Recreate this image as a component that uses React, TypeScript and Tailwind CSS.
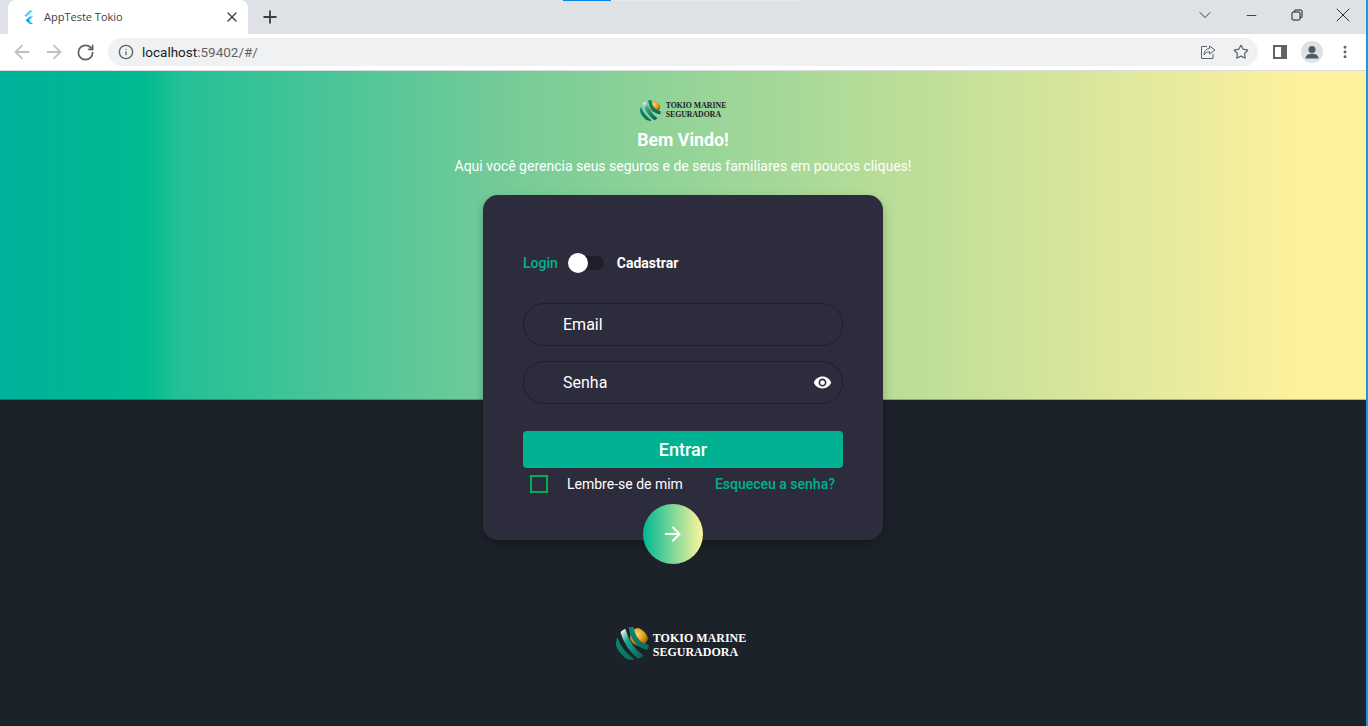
import React from 'react';
import { ArrowLeft, ArrowRight, RotateCw, Info, Star, X, Plus, ChevronDown, Minus, EllipsisVertical } from 'lucide-react';

function Globe({ size, id }: { size: number; id: string }) {
  return (
    <svg width={size} height={size} viewBox="0 0 40 40" fill="none" className="shrink-0">
      <defs>
        <clipPath id={`ball-${id}`}>
          <circle cx="20" cy="20" r="20" />
        </clipPath>
        <radialGradient id={`gold-${id}`} cx="0.4" cy="0.35" r="0.7">
          <stop offset="0" stopColor="#f8d777" />
          <stop offset="0.55" stopColor="#e09a15" />
          <stop offset="1" stopColor="#7d5210" />
        </radialGradient>
        <linearGradient id={`band-${id}`} x1="0" y1="0" x2="1" y2="1">
          <stop offset="0" stopColor="#eef8f4" />
          <stop offset="0.3" stopColor="#18a78c" />
          <stop offset="1" stopColor="#075f50" />
        </linearGradient>
        <linearGradient id={`dark-${id}`} x1="0" y1="0" x2="1" y2="1">
          <stop offset="0" stopColor="#0b8a74" />
          <stop offset="1" stopColor="#0a6a59" />
        </linearGradient>
      </defs>
      <g clipPath={`url(#ball-${id})`}>
        <circle cx="28" cy="12" r="11" fill={`url(#gold-${id})`} />
        <path d="M18 -2 C20 14 28 24 42 25" stroke={`url(#dark-${id})`} strokeWidth="6" />
        <path d="M8 3 C12 18 20 30 32 38" stroke={`url(#band-${id})`} strokeWidth="7" />
        <path d="M-1 14 C3 26 10 34 20 41" stroke={`url(#dark-${id})`} strokeWidth="6" />
      </g>
    </svg>
  );
}

function BrowserChrome() {
  return (
    <div className="h-[71px] shrink-0 flex flex-col bg-white">
      <div className="relative h-[34px] bg-[#dee1e6] flex items-end">
        <div className="absolute top-0 left-[563px] w-[48px] h-px bg-[#0a84e3]" />
        <div className="absolute top-0 left-[611px] w-[193px] h-px bg-[#e8e8e8]" />
        <div className="ml-2 w-[240px] h-[34px] bg-white rounded-t-lg flex items-center pl-[14px] pr-[8px]">
          <svg width="12" height="14" viewBox="0 0 12 14" className="shrink-0">
            <path d="M7.5 0.5 H11 L4 7 L2.5 5.5 Z" fill="#44d1fd" />
            <path d="M7.5 6.5 H11 L7 10.2 L11 14 H7.5 L3.6 10.2 Z" fill="#1fbcfd" />
            <path d="M5.5 9 L7 10.2 L5.3 11.8 Z" fill="#08589c" />
          </svg>
          <span className="ml-[10px] flex-1 text-[11px] text-[#3c4043] font-['Open_Sans','Liberation_Sans',sans-serif]">AppTeste Tokio</span>
          <X size={16} strokeWidth={2.2} className="text-[#45484c]" />
        </div>
        <div className="h-[34px] w-[38px] ml-[3px] flex items-center justify-center">
          <Plus size={20} strokeWidth={2.2} className="text-[#3c4043]" />
        </div>
        <div className="ml-auto h-[34px] flex items-start text-[#1b1c1e]">
          <div className="w-[46px] h-[30px] flex items-center justify-center"><ChevronDown size={20} strokeWidth={1} /></div>
          <div className="w-[46px] h-[30px] flex items-center justify-center"><Minus size={15} strokeWidth={1.3} /></div>
          <div className="w-[46px] h-[30px] flex items-center justify-center">
            <svg width="12" height="12" viewBox="0 0 12 12" fill="none" stroke="currentColor">
              <rect x="1" y="3" width="8" height="8" rx="1" />
              <path d="M3.5 3 V1.5 Q3.5 1 4 1 H10 Q11 1 11 2 V8 Q11 8.5 10.5 8.5 H9" />
            </svg>
          </div>
          <div className="w-[46px] h-[30px] flex items-center justify-center"><X size={24} strokeWidth={0.9} /></div>
        </div>
      </div>
      <div className="h-[36px] flex items-center pl-[11px] pr-[13px] border-b border-[#dadce0] box-content -mb-px">
        <ArrowLeft size={22} strokeWidth={2} className="text-[#bdc0c4]" />
        <ArrowRight size={22} strokeWidth={2} className="text-[#bdc0c4] ml-[10px]" />
        <RotateCw size={19} strokeWidth={2.2} className="text-[#5f6368] ml-[11px]" />
        <div className="ml-[13px] flex-1 h-[28px] rounded-full bg-[#eff1f3] flex items-center pl-[10px] pr-[9px]">
          <Info size={16} strokeWidth={2} className="text-[#5f6368]" />
          <span className="ml-[8px] text-[13.5px] font-['Roboto','Liberation_Sans',sans-serif] text-[#202124]">localhost<span className="text-[#5f6368]">:59402/#/</span></span>
          <div className="ml-auto flex items-center gap-[17px] text-[#5f6368]">
            <svg width="16" height="16" viewBox="0 0 16 16" fill="none" stroke="currentColor" strokeWidth="1">
              <path d="M7 2.5 H1.5 V14.5 H13 V10" />
              <path d="M9.5 2 L15 6 L9.5 10 V7.8 C7 7.8 5 9 4 11 C4 8 6 4.6 9.5 4.3 Z" />
            </svg>
            <Star size={16} strokeWidth={1.8} />
          </div>
        </div>
        <svg width="14" height="14" viewBox="0 0 14 14" className="ml-[15px]">
          <path d="M0 0 H14 V14 H0 Z M2 2 V12 H8 V2 Z" fill="#5f6368" fillRule="evenodd" />
          <rect x="2" y="2" width="6" height="10" fill="#fff" />
        </svg>
        <div className="ml-[14px] w-[22px] h-[22px] rounded-full bg-[#dfe1e5] overflow-hidden">
          <svg width="22" height="22" viewBox="0 0 22 22" fill="#4f5b6b">
            <circle cx="11" cy="8.5" r="3.5" />
            <path d="M4.5 17.5 C4.5 14 8 12.8 11 12.8 C14 12.8 17.5 14 17.5 17.5 Z" />
          </svg>
        </div>
        <EllipsisVertical size={16} strokeWidth={2.4} className="text-[#5f6368] ml-[14px]" />
      </div>
    </div>
  );
}

function LoginCard() {
  return (
    <div className="relative w-[400px] h-[345px] mt-[19px] rounded-[15px] bg-[#2d2c3c] shadow-[0_4px_10px_rgba(0,0,0,0.25)] px-10 pt-[56px] text-white">
      <div className="flex items-center h-6 text-[14px] font-medium">
        <span className="text-[#00b292]">Login</span>
        <div className="relative ml-[10px] w-[36px] h-[14px] rounded-full bg-[#1f1e2b]">
          <div className="absolute -top-[3px] left-0 w-5 h-5 rounded-full bg-white" />
        </div>
        <span className="ml-[13px] font-bold">Cadastrar</span>
      </div>
      <div className="mt-[28px] h-[43px] rounded-[21px] border border-[#1f1e2b] flex items-center pl-[39px] text-[16px]">Email</div>
      <div className="mt-[15px] h-[43px] rounded-[21px] border border-[#1f1e2b] flex items-center pl-[39px] pr-[10px] text-[16px]">
        <span>Senha</span>
        <svg width="19" height="19" viewBox="0 0 24 24" fill="currentColor" className="ml-auto">
          <path d="M12 4.5C7 4.5 2.73 7.61 1 12c1.73 4.39 6 7.5 11 7.5s9.27-3.11 11-7.5c-1.73-4.39-6-7.5-11-7.5zM12 17c-2.76 0-5-2.24-5-5s2.24-5 5-5 5 2.24 5 5-2.24 5-5 5zm0-8c-1.66 0-3 1.34-3 3s1.34 3 3 3 3-1.34 3-3-1.34-3-3-3z" />
        </svg>
      </div>
      <div className="mt-[27px] h-[37px] rounded-[4px] bg-[#00b292] flex items-center justify-center text-[18px] font-medium">Entrar</div>
      <div className="mt-[7px] flex items-center h-[18px] text-[14px]">
        <div className="ml-[7px] w-[18px] h-[18px] border-2 border-[#00ae55]" />
        <span className="ml-[19px]">Lembre-se de mim</span>
        <span className="ml-auto mr-2 text-[#00b292] font-medium">Esqueceu a senha?</span>
      </div>
      <div className="absolute left-[160px] top-[309px] w-[60px] h-[60px] rounded-full bg-[linear-gradient(90deg,#00b894,#fff59d)] flex items-center justify-center">
        <svg width="24" height="24" viewBox="0 0 24 24" fill="currentColor">
          <path d="M12 4l-1.41 1.41L16.17 11H4v2h12.17l-5.58 5.59L12 20l8-8z" />
        </svg>
      </div>
    </div>
  );
}

export default function App() {
  return (
    <div className="w-[1368px] h-[726px] overflow-hidden flex font-['Roboto','Liberation_Sans',sans-serif]">
      <div className="w-[1366px] flex flex-col">
        <BrowserChrome />
        <div className="relative flex-1 bg-[#1c2229]">
          <div className="absolute inset-x-0 top-0 h-[329px] border-b border-black/25 bg-[linear-gradient(90deg,#00b19b_0px,#00ba90_143px,#24c097_180px,#70ca98_480px,#b8dd98_885px,#e2e99d_1140px,#fff29c_1310px)]" />
          <div className="relative flex flex-col items-center">
            <div className="mt-[29px] h-[20px] flex items-center gap-[5px]">
              <Globe size={21} id="a" />
              <div className="font-['Liberation_Serif',serif] text-[7.8px] leading-[9px] text-[#1c2229] font-bold">
                <div>TOKIO MARINE</div>
                <div>SEGURADORA</div>
              </div>
            </div>
            <h1 className="mt-[8px] text-[17.7px] leading-[24px] font-bold text-white">Bem Vindo!</h1>
            <p className="mt-[4px] text-[14px] leading-[20px] text-white">Aqui você gerencia seus seguros e de seus familiares em poucos cliques!</p>
            <LoginCard />
            <div className="mt-[87px] mr-[4px] flex items-center gap-[4px]">
              <Globe size={33} id="b" />
              <div className="pt-[2px] font-['Liberation_Serif',serif] text-[12px] leading-[14px] font-bold text-white">
                <div>TOKIO MARINE</div>
                <div>SEGURADORA</div>
              </div>
            </div>
          </div>
        </div>
      </div>
      <div className="w-[2px] bg-[#1b98d8]" />
    </div>
  );
}
